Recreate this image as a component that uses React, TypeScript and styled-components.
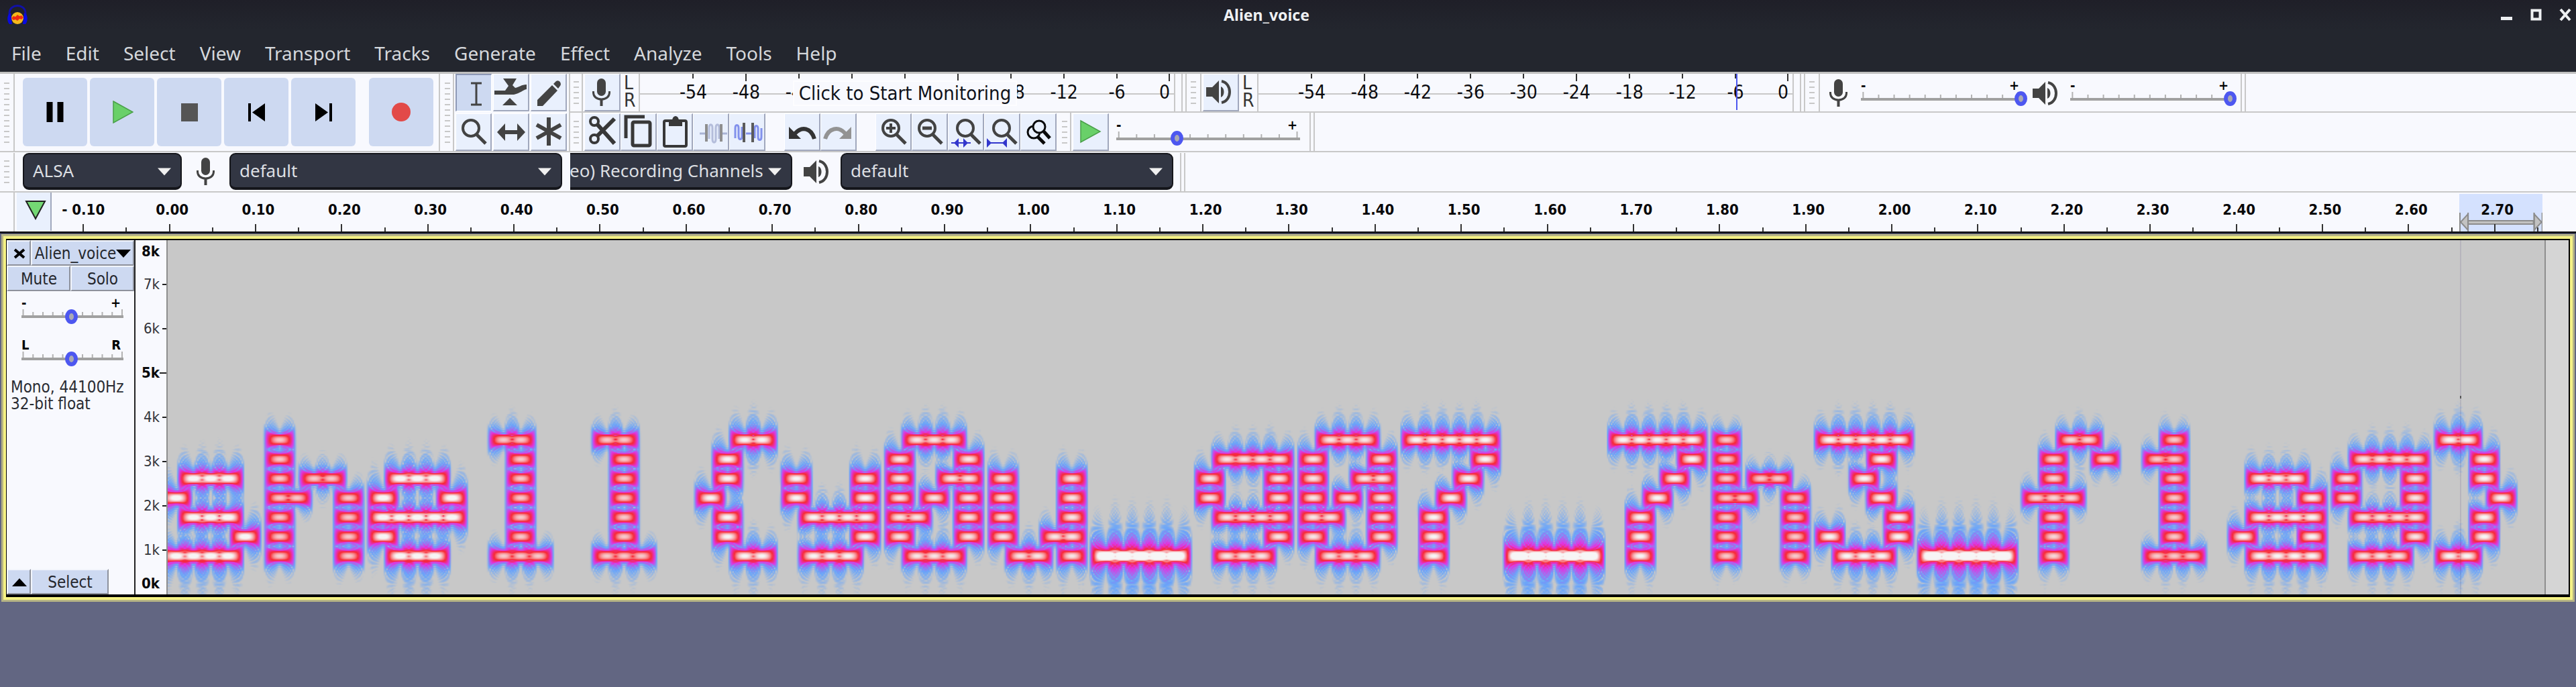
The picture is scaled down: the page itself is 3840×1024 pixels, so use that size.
import React, { useEffect, useRef, useState } from "react";
import styled, { createGlobalStyle, css } from "styled-components";

const uiFont = '"Noto Sans", "Open Sans", sans-serif';
const panelFont = '"DejaVu Sans Condensed", "DejaVu Sans", sans-serif';

const color = {
  frame: "#23262e",
  surface: "#f8f9fe",
  button: "#e9f0fd",
  buttonStrong: "#cdd9f1",
  line: "#c8c8c8",
  shade: "#a1a8bd",
  ink: "#434343",
  dark: "#323643",
  accent: "#4d57f0",
  canvas: "#626682",
};

const Global = createGlobalStyle`
  * { box-sizing: border-box; }
  body { margin: 0; background: ${color.canvas}; font-family: ${uiFont}; }
  button, select, input { font: inherit; margin: 0; }
`;

/* ---------- window frame ---------- */

const Window = styled.div`
  min-height: 100vh;
  background: ${color.canvas};
`;

const TitleBar = styled.header`
  display: grid;
  grid-template-columns: 1fr auto 1fr;
  align-items: center;
  height: 44px;
  padding: 0 4px 0 8px;
  background: linear-gradient(#1f1f28, ${color.frame});
  color: #eef0f2;
`;

const Title = styled.h1`
  margin: 0;
  padding-right: 68px;
  font: 700 23px/40px ${uiFont};
`;

const WindowButtons = styled.div`
  display: flex;
  justify-content: flex-end;
  gap: 21px;
`;

const WindowButton = styled.button`
  width: 23px;
  height: 32px;
  padding: 0;
  border: 0;
  background: none;
  color: inherit;
  svg { display: block; }
`;

const MenuBar = styled.nav`
  display: flex;
  align-items: flex-end;
  gap: 36px;
  height: 63px;
  padding: 0 17px;
  background: ${color.frame};
`;

const MenuItem = styled.button`
  padding: 0;
  border: 0;
  background: none;
  color: #d5d8dc;
  font: 28px/56px ${uiFont};
`;

/* ---------- toolbars ---------- */

const Dock = styled.section`
  background: ${color.surface};
  border-top: 3px solid #c0c0c0;
`;

const Columns = styled.div`
  display: flex;
`;

const Stack = styled.div`
  flex: 1;
  min-width: 0;
`;

const Row = styled.div<{ $h?: number }>`
  display: flex;
  height: ${(p) => p.$h ?? 58}px;
  border-bottom: 2px solid ${color.line};
`;

const GripBox = styled.span<{ $w: number }>`
  flex: none;
  display: flex;
  align-items: center;
  justify-content: center;
  width: ${(p) => p.$w}px;
  border-right: 2px solid ${color.line};
`;

const GripDots = styled.span<{ $n: number }>`
  width: 8px;
  height: ${(p) => p.$n * 8 - 6}px;
  background: repeating-linear-gradient(${color.line} 0 2px, transparent 2px 8px);
`;

const Grip = ({ n = 5, w = 19 }: { n?: number; w?: number }) => (
  <GripBox $w={w}>{n > 0 && <GripDots $n={n} />}</GripBox>
);

const EndMark = styled.span`
  flex: none;
  width: 8px;
  border: solid ${color.line};
  border-width: 0 2px;
`;

const Transport = styled.div`
  display: flex;
  height: 117px;
  border-right: 2px solid ${color.line};
  border-bottom: 2px solid ${color.line};
`;

const TransportButtons = styled.div`
  display: flex;
  gap: 4px;
  padding: 6px 8px 7px 12px;
`;

const BigButton = styled.button<{ $apart?: boolean }>`
  width: 96px;
  padding: 0;
  border: 0;
  border-radius: 6px;
  background: ${color.buttonStrong};
  margin-left: ${(p) => (p.$apart ? 16 : 0)}px;
  svg { display: block; margin: auto; }
`;

const Tools = styled.div`
  display: flex;
  height: 117px;
  padding-left: 3px;
  border-right: 2px solid ${color.line};
  border-bottom: 2px solid ${color.line};
`;

const ToolGrid = styled.div`
  display: grid;
  grid-template-columns: repeat(3, 54px);
  grid-template-rows: 55px 55px;
  gap: 4px 2px;
  padding: 0 3px 0 2px;
`;

const ToolButton = styled.button<{ $on?: boolean }>`
  flex: none;
  width: 54px;
  height: 56px;
  padding: 0;
  border: solid;
  border-width: 1px 2px 2px 1px;
  border-color: #fff ${color.shade} ${color.shade} #fff;
  background: ${color.button};
  ${(p) =>
    p.$on &&
    css`
      border-width: 2px 1px 1px 2px;
      border-color: #8d98b6 #fff #fff #8d98b6;
      background: ${color.buttonStrong};
    `}
  svg { display: block; margin: -1px; }
`;

const ButtonRun = styled.div`
  display: flex;
  padding: 1px 3px 0 2px;
`;

const RunGap = styled.span<{ $w: number }>`
  flex: none;
  width: ${(p) => p.$w}px;
`;

/* ---------- meters ---------- */

const Channels = styled.div`
  display: grid;
  grid-template-rows: 26px 30px;
  width: 27px;
  padding-left: 5px;
  font: 28px/28px ${panelFont};
  color: #333;
`;

const MeterBox = styled.div`
  position: relative;
  display: flex;
  width: 800px;
  padding: 0 6px 0 40px;
  border: solid ${color.line};
  border-width: 0 2px;
  background: linear-gradient(${color.line}, ${color.line}) 0 29px / 100% 2px no-repeat;
`;

const MeterMark = styled.div<{ $major: boolean; $last: boolean }>`
  flex: ${(p) => (p.$last ? "1" : "2")} 1 0;
  min-width: 0;
  display: flex;
  flex-direction: column;
  align-items: ${(p) => (p.$last ? "flex-end" : "center")};
  color: #0c0c10;
  font: 28px/34px ${panelFont};
  &::before {
    content: "";
    width: 2px;
    height: ${(p) => (p.$major ? 11 : 7)}px;
    margin-bottom: ${(p) => (p.$major ? 0 : 4)}px;
    background: #333;
  }
`;

const MonitorButton = styled.button`
  position: absolute;
  left: 228px;
  top: 10px;
  width: 334px;
  height: 38px;
  padding: 0;
  border: 2px solid #fdfdff;
  background: ${color.surface};
  color: #10121a;
  font: 29px/32px ${panelFont};
  white-space: nowrap;
`;

const PeakLine = styled.span`
  position: absolute;
  left: 712px;
  top: 0;
  width: 2px;
  height: 54px;
  background: ${color.accent};
`;

const dbMarks = [-54, -48, -42, -36, -30, -24, -18, -12, -6, 0];

const Meter = ({ children }: { children?: React.ReactNode }) => (
  <>
    <Channels>
      <span>L</span>
      <span>R</span>
    </Channels>
    <MeterBox>
      {dbMarks.map((db) => (
        <MeterMark key={db} $major={db % 24 === 0} $last={db === 0}>
          {db}
        </MeterMark>
      ))}
      {children}
    </MeterBox>
  </>
);

/* ---------- sliders ---------- */

const SliderBox = styled.label<{ $w: number }>`
  display: grid;
  grid-template-rows: 17px 23px;
  align-content: center;
  width: ${(p) => p.$w}px;
`;

const SliderEnds = styled.span<{ $inset: number }>`
  display: flex;
  justify-content: space-between;
  padding: 0 ${(p) => p.$inset}px 0 0;
  color: #000;
  font: 700 20px/16px ${panelFont};
`;

const SliderTrack = styled.span`
  position: relative;
  display: block;
  height: 23px;
`;

const Ticks = styled.svg`
  display: block;
  width: 100%;
  height: 14px;
  overflow: visible;
`;

const Range = styled.input`
  position: absolute;
  left: -10px;
  top: 0;
  width: calc(100% + 20px);
  height: 23px;
  appearance: none;
  background: none;
  &::-webkit-slider-thumb {
    appearance: none;
    width: 19px;
    height: 22px;
    border: 6px solid ${color.accent};
    border-radius: 50%;
    background: #a9a9b4;
  }
`;

const Slider = ({
  name,
  value,
  width,
  ends = ["-", "+"],
  inset = 2,
}: {
  name: string;
  value: number;
  width: number;
  ends?: [string, string];
  inset?: number;
}) => {
  const [v, setV] = useState(value);
  return (
    <SliderBox $w={width}>
      <SliderEnds $inset={inset}>
        <span>{ends[0]}</span>
        <span>{ends[1]}</span>
      </SliderEnds>
      <SliderTrack>
        <Ticks aria-hidden="true">
          <rect x="0" y="10" width="100%" height="4" fill="#a0a0a0" />
          {Array.from({ length: 11 }, (_, i) => (
            <rect
              key={i}
              x={`${1 + i * 9.7}%`}
              y={i % 10 === 0 ? 1 : 5}
              width="2"
              height={i % 10 === 0 ? 9 : 5}
              fill="#b2b2b2"
            />
          ))}
        </Ticks>
        <Range
          type="range"
          aria-label={name}
          min={0}
          max={100}
          value={v}
          onChange={(e) => setV(Number(e.target.value))}
        />
      </SliderTrack>
    </SliderBox>
  );
};

const Mixer = styled.div`
  display: flex;
  align-items: center;
  padding: 1px 16px 0 14px;
  gap: 18px;
`;

const SpeedBox = styled.div`
  display: flex;
  align-items: center;
  padding: 2px 14px 0 8px;
`;

/* ---------- drop-downs ---------- */

const SelectBox = styled.span<{ $w: number }>`
  position: relative;
  display: flex;
  justify-content: flex-end;
  width: ${(p) => p.$w}px;
  height: 55px;
  overflow: hidden;
`;

const NativeSelect = styled.select<{ $full?: number }>`
  flex: none;
  width: ${(p) => (p.$full ? `${p.$full}px` : "100%")};
  height: 55px;
  padding: 0 40px 2px 13px;
  appearance: none;
  border: 2px solid #15161b;
  border-bottom-width: 4px;
  border-radius: 9px;
  background: ${color.dark};
  color: #dcdfe2;
  font: 26px/32px ${uiFont};
`;

const Caret = styled.svg`
  position: absolute;
  right: 16px;
  top: 22px;
  pointer-events: none;
`;

const DropDown = ({
  name,
  value,
  width,
  full,
}: {
  name: string;
  value: string;
  width: number;
  full?: number;
}) => (
  <SelectBox $w={width}>
    <NativeSelect aria-label={name} $full={full} defaultValue={value}>
      <option>{value}</option>
    </NativeSelect>
    <Caret width="20" height="12" aria-hidden="true">
      <path d="M0 0.500h20l-10 11z" fill="#f0f0f0" />
    </Caret>
  </SelectBox>
);

const DeviceRow = styled(Row)`
  align-items: flex-start;
  padding-top: 1px;
`;

const DeviceGrip = styled.span`
  flex: none;
  display: flex;
  width: 22px;
  height: 56px;
  margin-right: 12px;
`;

const DeviceEnd = styled.span`
  display: flex;
  height: 57px;
  padding-left: 10px;
`;

const DeviceIcon = styled.span<{ $w: number }>`
  display: flex;
  align-items: center;
  justify-content: center;
  width: ${(p) => p.$w}px;
  height: 56px;
`;

/* ---------- time ruler ---------- */

const Ruler = styled.div`
  display: flex;
  height: 61px;
  border-bottom: 3px solid #14151a;
  background: ${color.surface};
`;

const PinButton = styled.button`
  flex: none;
  width: 52px;
  height: 57px;
  margin-left: 3px;
  padding: 0 0 6px 5px;
  border: 0;
  border-right: 2px solid ${color.shade};
  background: ${color.button};
  svg { display: block; margin: auto; }
`;

const TimeScale = styled.div`
  position: relative;
  flex: 1;
  display: flex;
  margin: 0 57px 0 -17px;
`;

const TimeMark = styled.div<{ $signed: boolean }>`
  position: relative;
  flex: 1 1 0;
  min-width: 0;
  display: flex;
  flex-direction: column;
  align-items: center;
  justify-content: space-between;
  padding-top: 14px;
  color: #08080a;
  font: 700 22px/24px ${panelFont};
  text-indent: ${(p) => (p.$signed ? 0 : 8)}px;
  &::before {
    content: "";
    order: 2;
    width: 2px;
    height: 11px;
    background: #333;
  }
  &::after {
    content: "";
    position: absolute;
    right: -1px;
    bottom: 0;
    width: 2px;
    height: 6px;
    background: #333;
  }
`;

const LoopRegion = styled.div`
  position: absolute;
  left: 96.850%;
  width: 3.350%;
  top: 2px;
  bottom: 0;
  background: #d4e1fe;
  svg { position: absolute; left: 0; bottom: 0; width: 100%; height: 30px; }
`;

const timeLabels = Array.from({ length: 29 }, (_, i) =>
  i === 0 ? "- 0.10" : ((i - 1) / 10).toFixed(2)
);

/* ---------- track ---------- */

const TrackFrame = styled.article`
  display: flex;
  margin: 1px 2px 0;
  border: 3px solid #b7b584;
  box-shadow: inset 0 0 0 4px #f5f284;
  padding: 6px 6px 8px 5px;
  background: #000;
`;

const TrackPanel = styled.div`
  flex: none;
  display: flex;
  flex-direction: column;
  width: 192px;
  border-right: 2px solid #222;
  background: ${color.surface};
  font: 24px/25px ${panelFont};
  color: #2a2c33;
`;

const PanelRow = styled.div<{ $cols: string }>`
  display: grid;
  grid-template-columns: ${(p) => p.$cols};
  height: 38px;
`;

const PanelButton = styled.button`
  display: flex;
  align-items: center;
  justify-content: center;
  padding: 1px 0 0 1px;
  border: solid;
  border-width: 2px;
  border-color: #f2f5fc #8e929c #8e929c #f2f5fc;
  background: ${color.buttonStrong};
  color: #24262c;
  font: 24px/28px ${panelFont};
  white-space: nowrap;
`;

const PanelSliders = styled.div`
  display: grid;
  gap: 23px;
  padding: 9px 0 0 22px;
`;

const TrackInfo = styled.p`
  margin: 19px 0 auto 6px;
  white-space: nowrap;
`;

const FrequencyScale = styled.div`
  flex: none;
  display: flex;
  flex-direction: column;
  width: 48px;
  border-right: 2px solid #8e8e8e;
  background: ${color.surface};
`;

const FreqMark = styled.div<{ $strong: boolean; $edge: boolean }>`
  flex: ${(p) => (p.$edge ? "0 0 33px" : "1 1 0")};
  display: flex;
  align-items: center;
  justify-content: flex-end;
  gap: ${(p) => (p.$strong ? 0 : 4)}px;
  padding-right: ${(p) => (p.$edge ? 10 : 0)}px;
  color: ${(p) => (p.$strong ? "#0a0a0c" : "#33353b")};
  font: ${(p) => (p.$strong ? 700 : 400)} 22px/24px ${panelFont};
  &::after {
    content: "";
    display: ${(p) => (p.$edge ? "none" : "block")};
    width: ${(p) => (p.$strong ? 10 : 6)}px;
    height: 2px;
    background: #222;
  }
`;

const ClipArea = styled.div`
  position: relative;
  flex: 1;
  min-width: 0;
  background: #c8c8c8;
`;

const SpectrumCanvas = styled.canvas`
  display: block;
  width: 100%;
  height: 528px;
`;

const Cursor = styled.span`
  position: absolute;
  left: 96.440%;
  top: 0;
  bottom: 0;
  width: 2px;
  background: rgba(60, 50, 110, 0.12);
  &::after {
    content: "";
    position: absolute;
    top: 232px;
    width: 2px;
    height: 4px;
    background: #555;
  }
`;

const AfterClip = styled.div`
  flex: none;
  width: 36px;
  border-left: 2px solid #8f8f8f;
  background: #d5d5d5;
`;

/* ---------- spectrogram ---------- */

const glyphs: Record<string, string> = {
  s: "...../...../.###./#..../.###./....#/####.",
  h: "#..../#..../#.##./##..#/#...#/#...#/#...#",
  e: "...../...../.###./#...#/#####/#..../.###.",
  l: ".##../..#../..#../..#../..#../..#../.###.",
  "{": "...##/..#../..#../.#.../..#../..#../...##",
  y: "...../...../#...#/#...#/.####/....#/.###.",
  "0": ".###./#...#/#..##/#.#.#/##..#/#...#/.###.",
  u: "...../...../#...#/#...#/#...#/#..##/.##.#",
  _: "...../...../...../...../...../...../#####",
  g: "...../.####/#...#/#...#/.####/....#/.###.",
  "7": "#####/....#/...#./..#../.#.../.#.../.#...",
  "3": "#####/...#./..#../...#./....#/#...#/.###.",
  f: "..##./.#..#/.#.../###../.#.../.#.../.#...",
  "1": "..#../.##../..#../..#../..#../..#../.###.",
  a: "...../...../.###./....#/.####/#...#/.####",
  "}": "##.../..#../..#../...#./..#../..#../##...",
};
const message = "shell{y0u_g07_7h3_f1ag}";

const RATE = 44100;
const CELL = 882;
const WINDOW = 1024;
const FFT = 2048;
const stops = [
  [200, 200, 200],
  [105, 165, 250],
  [225, 52, 225],
  [248, 40, 50],
  [247, 245, 245],
];

function synthesise(): Float64Array {
  const out = new Float64Array(message.length * 6 * CELL);
  [...message].forEach((ch, g) => {
    const rows = glyphs[ch].split("/");
    let most = 1;
    for (let c = 0; c < 5; c++) {
      most = Math.max(most, rows.filter((r) => r[c] === "#").length);
    }
    for (let c = 0; c < 5; c++) {
      const start = (g * 6 + c) * CELL;
      rows.forEach((r, i) => {
        if (r[c] !== "#") return;
        const w = (2 * Math.PI * 440 * (8 - i)) / RATE;
        for (let n = 0; n < CELL; n++) {
          const fade = 0.5 - 0.5 * Math.cos((2 * Math.PI * n) / (CELL - 1));
          out[start + n] += (Math.sin(w * n) * fade) / most;
        }
      });
    }
  });
  return out;
}

function transform(re: Float64Array, im: Float64Array) {
  const n = re.length;
  for (let i = 1, j = 0; i < n; i++) {
    let bit = n >> 1;
    for (; j & bit; bit >>= 1) j ^= bit;
    j ^= bit;
    if (i < j) {
      const r = re[i];
      const m = im[i];
      re[i] = re[j];
      im[i] = im[j];
      re[j] = r;
      im[j] = m;
    }
  }
  for (let len = 2; len <= n; len <<= 1) {
    const half = len >> 1;
    for (let k = 0; k < half; k++) {
      const wr = Math.cos((-2 * Math.PI * k) / len);
      const wi = Math.sin((-2 * Math.PI * k) / len);
      for (let i = k; i < n; i += len) {
        const j = i + half;
        const xr = re[j] * wr - im[j] * wi;
        const xi = re[j] * wi + im[j] * wr;
        re[j] = re[i] - xr;
        im[j] = im[i] - xi;
        re[i] += xr;
        im[i] += xi;
      }
    }
  }
}

function drawSpectrum(canvas: HTMLCanvasElement) {
  const ctx = canvas.getContext("2d");
  if (!ctx) return;
  const { width, height } = canvas;
  const signal = synthesise();
  const image = ctx.createImageData(width, height);
  const re = new Float64Array(FFT);
  const im = new Float64Array(FFT);
  const level = new Float64Array(FFT / 2);
  const hann = Array.from(
    { length: WINDOW },
    (_, i) => 0.5 - 0.5 * Math.cos((2 * Math.PI * i) / WINDOW)
  );
  for (let x = 0; x < width; x++) {
    const mid = Math.round(((x + 0.5) / width) * signal.length);
    re.fill(0);
    im.fill(0);
    for (let i = 0; i < WINDOW; i++) {
      re[i] = (signal[mid - WINDOW / 2 + i] || 0) * hann[i];
    }
    transform(re, im);
    for (let k = 0; k < FFT / 2; k++) {
      const power = (re[k] * re[k] + im[k] * im[k]) / ((WINDOW / 4) * (WINDOW / 4));
      level[k] = Math.max(0, Math.min(1, 1 + (10 * Math.log10(power + 1e-14) + 16) / 80));
    }
    for (let y = 0; y < height; y++) {
      const bin = (((height - y) / 0.0656) * FFT) / RATE;
      const b = Math.floor(bin);
      const v = level[b] + (level[b + 1] - level[b]) * (bin - b);
      const s = Math.min(3, Math.floor(v * 4));
      const t = v * 4 - s;
      const o = (y * width + x) * 4;
      for (let c = 0; c < 3; c++) {
        image.data[o + c] = stops[s][c] + (stops[s + 1][c] - stops[s][c]) * t;
      }
      image.data[o + 3] = 255;
    }
  }
  ctx.putImageData(image, 0, 0);
}

const Spectrogram = () => {
  const ref = useRef<HTMLCanvasElement>(null);
  useEffect(() => {
    if (ref.current) drawSpectrum(ref.current);
  }, []);
  return <SpectrumCanvas ref={ref} width={1772} height={528} />;
};

/* ---------- icons ---------- */

const Icon = ({ children, w = 54, h = 56 }: { children: React.ReactNode; w?: number; h?: number }) => (
  <svg width={w} height={h} viewBox={`0 0 ${w} ${h}`} fill="none" stroke={color.ink} aria-hidden="true">
    {children}
  </svg>
);

const MicShape = () => (
  <>
    <rect x="7" y="0" width="13" height="26" rx="6.500" fill={color.ink} stroke="none" />
    <path d="M1.500 19v2c0 6 5 10 12 10s12-4 12-10v-2" strokeWidth="3" />
    <path d="M13.500 31v10" strokeWidth="4" />
  </>
);

const SpeakerShape = () => (
  <>
    <path d="M0 11h9L19 1v34L9 25H0z" fill={color.ink} stroke="none" />
    <path d="M22 10c6 2 6 14 0 16z" fill={color.ink} stroke="none" />
    <path d="M23 2c16 3 16 29 0 32" strokeWidth="4" />
  </>
);

const Lens = ({ x = 23 }: { x?: number }) => (
  <>
    <circle cx={x} cy="22" r="12" strokeWidth="4" />
    <path d={`M${x + 9} 32l13 13`} strokeWidth="5" />
  </>
);

const toolIcons: [string, React.ReactNode][] = [
  ["Selection tool", <path d="M22 13h16M22 45h16M30 13v32" strokeWidth="3" />],
  [
    "Envelope tool",
    <g fill={color.ink} stroke="none">
      <path d="M15 7h20l-6 10 4 4c6-1 9-5 17-5v7c-6 1-9 6-19 8H2v-6h16l5-7z" />
      <path d="M25 36l11 11H14z" />
    </g>,
  ],
  [
    "Draw tool",
    <g fill={color.ink} stroke="none">
      <path d="M10 48v-9l22-22 8 8-22 23z" />
      <path d="M34 15l4-4c4-3 9 3 6 7l-3 4z" />
    </g>,
  ],
  ["Zoom tool", <Lens />],
  [
    "Time shift tool",
    <>
      <path d="M14 28h26" strokeWidth="6" />
      <path d="M6 28l12-13v26zM48 28L36 15v26z" fill={color.ink} stroke="none" />
    </>,
  ],
  ["Multi tool", <path d="M27 6v42M9 17l36 20M9 37l36-20" strokeWidth="6" />],
];

const editIcons: [string, React.ReactNode][] = [
  [
    "Cut",
    <g stroke="#383838">
      <circle cx="15" cy="12" r="6" strokeWidth="4" />
      <circle cx="15" cy="38" r="6" strokeWidth="4" />
      <path d="M19 34L45 8M19 16l26 29" strokeWidth="6" />
    </g>,
  ],
  [
    "Copy",
    <g stroke="#383838" strokeWidth="5">
      <path d="M36 5H8v32" />
      <rect x="18" y="13" width="26" height="35" rx="2" />
    </g>,
  ],
  [
    "Paste",
    <g stroke="#383838" strokeWidth="4">
      <rect x="11" y="11" width="33" height="38" rx="2" />
      <path d="M18 19v-9h5c1-8 9-8 10 0h5v9z" fill="#383838" stroke="none" />
    </g>,
  ],
  [
    "Trim audio",
    <>
      <path d="M10 30h8M44 30h7" stroke="#a9b3d4" strokeWidth="3" />
      <path
        d="M24 38V22c0-7 5-7 5 0v16c0 7 5 7 5 0V22c0-7 5-7 5 0v16"
        stroke="#b4bddb"
        strokeWidth="3"
      />
      <path d="M20 16v26M42 16v26" stroke="#8e8e8e" strokeWidth="4" />
    </>,
  ],
  [
    "Silence audio",
    <>
      <path
        d="M9 37V22c0-6 5-6 5 0v12c0 6 5 6 5 0V20M38 37V23c0-6 5-6 5 0v12c0 6 5 6 5 0V22M25 30h8"
        stroke="#8291ec"
        strokeWidth="3"
      />
      <path d="M22 14v29M35 14v29" stroke="#5b5b5b" strokeWidth="4" />
    </>,
  ],
];

const undoIcons: [string, React.ReactNode][] = [
  [
    "Undo",
    <>
      <path d="M16 30c10-11 24-9 29 8" stroke="#333" strokeWidth="6" />
      <path d="M7 20v18h18z" fill="#333" stroke="none" />
    </>,
  ],
  [
    "Redo",
    <>
      <path d="M37 30C27 19 12 21 7 38" stroke="#939393" strokeWidth="6" />
      <path d="M46 20v18H28z" fill="#939393" stroke="none" />
    </>,
  ],
];

const blue = "#3236cc";
const zoomIcons: [string, React.ReactNode][] = [
  [
    "Zoom in",
    <>
      <Lens />
      <path d="M16 22h14M23 15v14" strokeWidth="4" />
    </>,
  ],
  [
    "Zoom out",
    <>
      <Lens />
      <path d="M16 22h14" strokeWidth="5" />
    </>,
  ],
  [
    "Fit selection to width",
    <>
      <Lens x={26} />
      <path d="M5 44h29" stroke={blue} strokeWidth="2" />
      <path d="M9 44l7-7v14zM30 44l-7-7v14z" fill={blue} stroke="none" />
    </>,
  ],
  [
    "Fit project to width",
    <>
      <Lens x={26} />
      <path d="M5 44h29" stroke={blue} strokeWidth="2" />
      <path d="M4 37l7 7-7 7zM34 37l-7 7 7 7z" fill={blue} stroke="none" />
    </>,
  ],
  [
    "Zoom toggle",
    <g stroke="#0a0a0a">
      <circle cx="20" cy="28" r="9" strokeWidth="3" />
      <path d="M26 35l10 10" strokeWidth="5" />
      <circle cx="28" cy="20" r="9" strokeWidth="3" fill={color.button} />
      <path d="M35 27l9 10" strokeWidth="5" />
    </g>,
  ],
];

const PlayShape = () => <path d="M1 1l29 16L1 33z" fill="#69d069" stroke="#4aa04a" strokeWidth="1.500" />;

const IconButtons = ({ items, on }: { items: [string, React.ReactNode][]; on?: number }) => (
  <>
    {items.map(([name, art], i) => (
      <ToolButton key={name} aria-label={name} $on={on === i}>
        <Icon>{art}</Icon>
      </ToolButton>
    ))}
  </>
);

const transportButtons: [string, React.ReactNode][] = [
  ["Pause", <path d="M9 2v30M25 2v30" stroke="#000" strokeWidth="9" />],
  ["Play", <g transform="translate(3 0)"><PlayShape /></g>],
  ["Stop", <rect x="5" y="4" width="25" height="27" fill="#555" stroke="none" />],
  ["Skip to start", <path d="M5 4h4v27H5zM30 4v27L11 17.500z" fill="#000" stroke="none" />],
  ["Skip to end", <path d="M26 4h4v27h-4zM5 4v27l19-13.500z" fill="#000" stroke="none" />],
  ["Record", <circle cx="17" cy="17" r="14" fill="#e24a48" stroke="none" />],
];

const menus = ["File", "Edit", "Select", "View", "Transport", "Tracks", "Generate", "Effect", "Analyze", "Tools", "Help"];

export default function App() {
  return (
    <Window>
      <Global />
      <TitleBar>
        <svg width="36" height="32" viewBox="0 0 36 32" aria-hidden="true">
          <path d="M6 19V13C7 -1 29 -1 30 13v6" fill="none" stroke="#1111a8" strokeWidth="3" />
          <ellipse cx="18" cy="21" rx="9" ry="9" fill="#f5b81c" />
          <path d="M9 21l3-3 3 1 3-3 3 2 3-1 3 3-3 3-3-1-3 3-3-2-3 1z" fill="#f02a10" />
          <path d="M8 13c-6 2-6 13-2 17h4zM28 13c6 2 6 13 2 17h-4z" fill="#0a0ae0" />
        </svg>
        <Title>Alien_voice</Title>
        <WindowButtons>
          <WindowButton aria-label="Minimize">
            <svg width="23" height="32"><path d="M3 19h17v5H3z" fill="currentColor" /></svg>
          </WindowButton>
          <WindowButton aria-label="Maximize">
            <svg width="23" height="32"><path d="M5.500 9.500h12v13h-12z" fill="none" stroke="currentColor" strokeWidth="4" /></svg>
          </WindowButton>
          <WindowButton aria-label="Close">
            <svg width="23" height="32"><path d="M4 8l14 16M18 8L4 24" fill="none" stroke="currentColor" strokeWidth="4" /></svg>
          </WindowButton>
        </WindowButtons>
      </TitleBar>
      <MenuBar>
        {menus.map((m) => (
          <MenuItem key={m}>{m}</MenuItem>
        ))}
      </MenuBar>

      <Dock>
        <Columns>
          <Transport>
            <Grip n={12} w={22} />
            <TransportButtons>
              {transportButtons.map(([name, art]) => (
                <BigButton key={name} aria-label={name} $apart={name === "Record"}>
                  <Icon w={34} h={34}>{art}</Icon>
                </BigButton>
              ))}
            </TransportButtons>
          </Transport>
          <Tools>
            <Grip n={12} w={18} />
            <ToolGrid>
              <IconButtons items={toolIcons} on={0} />
            </ToolGrid>
          </Tools>
          <Stack>
            <Row>
              <Grip />
              <RunGap $w={2} />
              <ToolButton aria-label="Recording meter">
                <Icon><g transform="translate(12 7)"><MicShape /></g></Icon>
              </ToolButton>
              <Meter>
                <MonitorButton>Click to Start Monitoring</MonitorButton>
              </Meter>
              <RunGap $w={9} />
              <EndMark />
              <Grip w={22} />
              <RunGap $w={2} />
              <ToolButton aria-label="Playback meter">
                <Icon><g transform="translate(5 9)"><SpeakerShape /></g></Icon>
              </ToolButton>
              <Meter>
                <PeakLine />
              </Meter>
              <RunGap $w={9} />
              <EndMark />
              <Grip w={22} />
              <Mixer>
                <Icon w={29} h={42}><MicShape /></Icon>
                <Slider name="Recording volume" value={100} width={238} inset={2} />
                <Icon w={38} h={36}><SpeakerShape /></Icon>
                <Slider name="Playback volume" value={100} width={238} inset={2} />
              </Mixer>
              <EndMark />
            </Row>
            <Row $h={59}>
              <Grip />
              <ButtonRun>
                <IconButtons items={editIcons} />
                <RunGap $w={28} />
                <IconButtons items={undoIcons} />
                <RunGap $w={28} />
                <IconButtons items={zoomIcons} />
              </ButtonRun>
              <Grip />
              <ButtonRun>
                <ToolButton aria-label="Play at speed">
                  <Icon><g transform="translate(11 10)"><PlayShape /></g></Icon>
                </ToolButton>
              </ButtonRun>
              <SpeedBox>
                <Slider name="Playback speed" value={33} width={274} inset={4} />
              </SpeedBox>
              <EndMark />
            </Row>
          </Stack>
        </Columns>

        <DeviceRow $h={60}>
          <DeviceGrip><Grip w={22} /></DeviceGrip>
          <DropDown name="Audio host" value="ALSA" width={237} />
          <DeviceIcon $w={71}>
            <Icon w={27} h={42}><MicShape /></Icon>
          </DeviceIcon>
          <DropDown name="Recording device" value="default" width={496} />
          <RunGap $w={12} />
          <DropDown name="Recording channels" value="2 (Stereo) Recording Channels" width={331} full={425} />
          <DeviceIcon $w={72}>
            <Icon w={38} h={36}><SpeakerShape /></Icon>
          </DeviceIcon>
          <DropDown name="Playback device" value="default" width={496} />
          <DeviceEnd><EndMark /></DeviceEnd>
        </DeviceRow>

        <Ruler>
          <Grip n={0} w={22} />
          <PinButton aria-label="Pinned play head">
            <svg width="32" height="30"><path d="M2 2h28L16 28z" fill="#74d874" stroke="#222" strokeWidth="2" /></svg>
          </PinButton>
          <TimeScale>
            <LoopRegion>
              <svg viewBox="0 0 124 30" preserveAspectRatio="none" fill="#c2c2c2" stroke="#8c8c8c" strokeWidth="2">
                <path d="M12 14h98v5H12z" />
                <path d="M13 4v24L2 16zM111 4v24l11-12z" />
                <path d="M1 2v28M123 2v28M13 2v28M111 2v28" fill="none" />
              </svg>
            </LoopRegion>
            {timeLabels.map((t, i) => (
              <TimeMark key={t} $signed={i === 0}>{t}</TimeMark>
            ))}
          </TimeScale>
        </Ruler>
      </Dock>

      <TrackFrame>
        <TrackPanel>
          <PanelRow $cols="36px 1fr">
            <PanelButton aria-label="Close track">
              <svg width="18" height="18"><path d="M2 3l14 12M16 3L2 15" stroke="#000" strokeWidth="4" /></svg>
            </PanelButton>
            <PanelButton>
              Alien_voice
              <svg width="22" height="14"><path d="M0 1h22L11 13z" fill="#000" /></svg>
            </PanelButton>
          </PanelRow>
          <PanelRow $cols="1fr 1fr">
            <PanelButton>Mute</PanelButton>
            <PanelButton>Solo</PanelButton>
          </PanelRow>
          <PanelSliders>
            <Slider name="Gain" value={49} width={152} inset={4} />
            <Slider name="Pan" value={49} width={152} ends={["L", "R"]} inset={4} />
          </PanelSliders>
          <TrackInfo>
            Mono, 44100Hz
            <br />
            32-bit float
          </TrackInfo>
          <PanelRow $cols="36px 116px">
            <PanelButton aria-label="Collapse track">
              <svg width="22" height="14"><path d="M0 13h22L11 1z" fill="#000" /></svg>
            </PanelButton>
            <PanelButton>Select</PanelButton>
          </PanelRow>
        </TrackPanel>
        <FrequencyScale>
          {[8, 7, 6, 5, 4, 3, 2, 1, 0].map((k) => (
            <FreqMark key={k} $strong={k === 8 || k === 5 || k === 0} $edge={k === 8 || k === 0}>
              {k}k
            </FreqMark>
          ))}
        </FrequencyScale>
        <ClipArea>
          <Spectrogram />
          <Cursor />
        </ClipArea>
        <AfterClip />
      </TrackFrame>
    </Window>
  );
}
